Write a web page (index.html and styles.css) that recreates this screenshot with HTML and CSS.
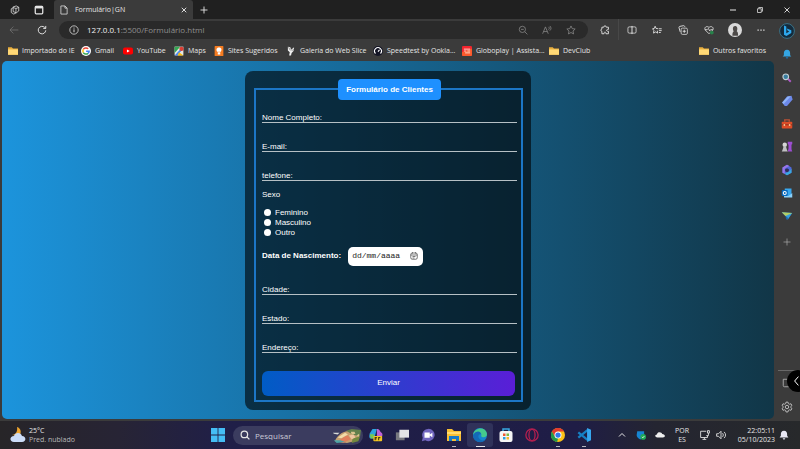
FILE: index.html
```html
<!DOCTYPE html>
<html lang="pt-BR">
<head>
<meta charset="utf-8">
<meta name="viewport" content="width=device-width, initial-scale=1">
<title>Formulário|GN</title>
<link rel="stylesheet" href="styles.css">
</head>
<body>
<header class="tabbar">
  <div class="tab-tools">
    <button class="ib" aria-label="Workspaces"><svg class="i10" viewBox="0 0 16 16"><path d="M5 3l5-1.500 4 2v6l-4 3-5-2zM5 4.500L2 6v6l4 2.500 4-2M5 4l4.500 1.500V12M9.500 5.500L14 4"/></svg></button>
    <button class="ib" aria-label="Guias"><svg class="i10" viewBox="0 0 16 16"><rect x="2" y="2" width="12" height="12" rx="1.500" fill="none" stroke-width="2"/><path d="M2 3.500h12" stroke-width="4"/></svg></button>
  </div>
  <div class="tab">
    <svg class="i10" viewBox="0 0 16 16"><path d="M3 1.500h6.500L13 5v9.500H3zM9.500 1.500V5H13"/></svg>
    <span>Formulário|GN</span>
    <button class="ib" aria-label="Fechar guia"><svg class="i6" viewBox="0 0 16 16"><path d="M2 2l12 12M14 2L2 14" stroke-width="2.500"/></svg></button>
  </div>
  <button class="ib newtab" aria-label="Nova guia"><svg class="i8" viewBox="0 0 16 16"><path d="M8 1v14M1 8h14" stroke-width="1.800"/></svg></button>
  <div class="win">
    <button class="ib" aria-label="Minimizar"><svg class="i6" viewBox="0 0 12 12"><path d="M0 6h12" stroke-width="2"/></svg></button>
    <button class="ib" aria-label="Restaurar"><svg class="i6" viewBox="0 0 12 12"><path d="M1 3.500h7.500V11H1zM3.500 3V1H11v7.500H9" stroke-width="1.500"/></svg></button>
    <button class="ib" aria-label="Fechar"><svg class="i6" viewBox="0 0 12 12"><path d="M1 1l10 10M11 1L1 11" stroke-width="1.800"/></svg></button>
  </div>
</header>

<div class="shell">
  <div class="main">
    <nav class="toolbar">
      <button class="ib back" aria-label="Voltar"><svg class="i10" viewBox="0 0 16 16"><path d="M15 8H1.500M7 2.500L1.500 8 7 13.500"/></svg></button>
      <button class="ib reload" aria-label="Atualizar"><svg class="i10" viewBox="0 0 16 16"><path d="M14 8.500A6 6 0 1 1 12 3.700l2 1.600M14 1.500v4h-4" stroke-width="1.500"/></svg></button>
      <div class="address">
        <svg class="i10" viewBox="0 0 16 16"><circle cx="8" cy="8" r="6.700" fill="none"/><path d="M8 7v4.500M8 4.200v1.500" stroke-width="1.500"/></svg>
        <span class="url"><b>127.0.0.1</b>:5500/Formulário.html</span>
        <button class="ib dim" aria-label="Zoom"><svg class="i10" viewBox="0 0 16 16"><circle cx="7" cy="7" r="5" fill="none"/><path d="M11 11l4 4M4.800 7h4.400"/></svg></button>
        <button class="ib dim" aria-label="Ler em voz alta"><svg class="i10" viewBox="0 0 16 16"><path d="M1 14L5.500 3 10 14M2.800 10.500h5.400M10.500 3c1.500 1.500 1.500 3 0 4.500M12.500 1.500c2.500 2.500 2.500 5 0 7.500"/></svg></button>
        <button class="ib dim" aria-label="Adicionar aos favoritos"><svg class="i10" viewBox="0 0 16 16"><path d="M8 1.500l2 4.300 4.700.6-3.500 3.200.9 4.700L8 12l-4.100 2.300.9-4.700L1.300 6.400 6 5.800z"/></svg></button>
      </div>
      <div class="actions">
        <button class="ib" aria-label="Extensões"><svg class="i10" viewBox="0 0 16 16"><path d="M3 3.500h3c0-3 4-3 4 0h3.500V7c-4-.5-4 3.500 0 3V14H9.500C10 10.500 6 10.500 6.500 14H3v-4c-2.500-.5-2.500-3 0-3.500z" stroke-width="1.400"/></svg></button>
        <button class="ib split" aria-label="Dividir tela"><svg class="i10" viewBox="0 0 16 16"><rect x="1.500" y="3" width="13" height="10" rx="2" fill="none"/><path d="M8 1.500v13" stroke-width="1.500"/></svg></button>
        <button class="ib" aria-label="Favoritos"><svg class="i10" viewBox="0 0 16 16"><path d="M10 6L6.500 5.500 5 2 3.700 5.500.8 6 3 8.500 2.500 13 6 11l3 2-.5-4M11 6h4.500M11 9h4.500M11 12h3" stroke-width="1.400"/></svg></button>
        <button class="ib" aria-label="Coleções"><svg class="i10" viewBox="0 0 16 16"><rect x="5" y="5" width="10" height="10" rx="2" fill="none"/><path d="M10 7.500v5M7.500 10h5M3.500 11L1.500 4c0-1 .5-1.500 1.500-1.800L9 1c1 0 1.500.5 2 2" stroke-width="1.400"/></svg></button>
        <button class="ib" aria-label="Desempenho"><svg class="i10" viewBox="0 0 16 16"><path d="M8 14L2 8C-.5 4 4.500.5 8 4c3.500-3.500 8.500 0 6 4zM1.500 7.500H5l2-2 2 4 1.500-2H14" stroke-width="1.300"/><circle cx="12.500" cy="12" r="3" fill="#27824a" stroke="none"/></svg></button>
        <button class="ib" aria-label="Perfil"><svg class="i14" viewBox="0 0 16 16"><circle cx="8" cy="8" r="8" fill="#d9d9d9" stroke="none"/><path d="M5 14.500c0-3 .5-4 1.500-5C5 7 5.500 3.500 8 3.500s3.500 2.500 2 6c1.500 1 1.500 3 1.500 5z" fill="#4d4a48" stroke="none"/></svg></button>
        <button class="ib" aria-label="Mais"><svg class="i8" viewBox="0 0 16 16"><path d="M1 8h2.500M6.800 8h2.500M12.500 8H15" stroke-width="2.500"/></svg></button>
      </div>
    </nav>

    <nav class="bookmarks" aria-label="Favoritos">
      <a href="#"><svg class="i10" viewBox="0 0 16 16"><use href="#folder"/></svg>Importado do IE</a>
      <a href="#"><svg class="i10" viewBox="0 0 16 16"><circle cx="8" cy="8" r="8" fill="#fff" stroke="none"/><g fill="none" stroke-width="2.400"><path d="M11.500 4.500A5 5 0 0 0 3.700 5.500" stroke="#ea4335"/><path d="M3.700 5.500a5 5 0 0 0 0 5" stroke="#fbbc05"/><path d="M3.700 10.500a5 5 0 0 0 7.600 1.200" stroke="#34a853"/><path d="M11.300 11.700A5 5 0 0 0 13 8.200H8.200" stroke="#4285f4"/></g></svg>Gmail</a>
      <a href="#"><svg class="i10" viewBox="0 0 16 16"><rect y="2.500" width="16" height="11" rx="3" fill="#f00" stroke="none"/><path d="M6.300 5.500l4.500 2.500-4.500 2.500z" fill="#fff" stroke="none"/></svg>YouTube</a>
      <a href="#"><svg class="i10" viewBox="0 0 16 16"><g stroke="none"><path d="M1 1h14v14H1z" fill="#e8e8e3"/><path d="M1 1h9L1 11z" fill="#34a853"/><path d="M1 15L12 3l2 2L5 15z" fill="#4285f4"/><path d="M8 10l7 5H6z" fill="#fbbc04"/><circle cx="12" cy="4.500" r="3.500" fill="#d93f35"/></g></svg>Maps</a>
      <a href="#"><svg class="i10" viewBox="0 0 16 16"><rect x="1" width="14" height="16" rx="1" fill="#f47b20" stroke="none"/><path d="M5 9C2.500 5 5 2.500 8 2.500S13.500 5 11 9H5zM6 10h4v3.500H6z" fill="#fff" stroke="none"/></svg>Sites Sugeridos</a>
      <a href="#"><svg class="i10" viewBox="0 0 16 16"><path d="M3 1l4 1 1 4 5-4-1 6-3 3-1 4H5l1-5-3-3z" fill="#eee" stroke="none"/><path d="M4 2l3 5M9 8l3-3" stroke="#777"/></svg>Galeria do Web Slice</a>
      <a href="#"><svg class="i10" viewBox="0 0 16 16"><circle cx="8" cy="8" r="8" fill="#141526" stroke="none"/><path d="M4 12a5.500 5.500 0 1 1 8 0M8 9l2.500-3" stroke="#fff" stroke-width="1.800"/></svg>Speedtest by Ookla...</a>
      <a href="#"><svg class="i10" viewBox="0 0 16 16"><rect width="16" height="16" rx="2" fill="#f3252f" stroke="none"/><path d="M0 10l16-6v10a2 2 0 0 1-2 2H2a2 2 0 0 1-2-2z" fill="#fb5a2c" stroke="none"/><path d="M3 5h10M3 8h4M8.500 8H13M5 11h8" stroke="#ffd3c4" stroke-width="1.600"/></svg>Globoplay | Assista...</a>
      <a href="#"><svg class="i10" viewBox="0 0 16 16"><use href="#folder"/></svg>DevClub</a>
      <a href="#"><svg class="i10" viewBox="0 0 16 16"><use href="#folder"/></svg>Outros favoritos</a>
    </nav>

    <main class="page">
      <form class="box" action="#">
        <fieldset>
          <legend>Formulário de Clientes</legend>
          <div class="field"><label for="nome">Nome Completo:</label><input id="nome" type="text"></div>
          <div class="field"><label for="email">E-mail:</label><input id="email" type="email"></div>
          <div class="field"><label for="tel">telefone:</label><input id="tel" type="tel"></div>
          <div class="sexo" role="radiogroup" aria-labelledby="sexo">
            <p id="sexo">Sexo</p>
            <label><input type="radio" name="sexo">Feminino</label>
            <label><input type="radio" name="sexo">Masculino</label>
            <label><input type="radio" name="sexo">Outro</label>
          </div>
          <div class="birth">
            <label for="nasc">Data de Nascimento:</label>
            <div class="date">
              <input id="nasc" type="text" placeholder="dd/mm/aaaa">
              <button type="button" aria-label="Abrir calendário"><svg class="i8" viewBox="0 0 16 16"><rect x="1.500" y="2" width="13" height="12.500" rx="3" fill="none"/><path d="M1.500 6h13M5 9h6M5 12h4M5 .5V3M11 .5V3"/></svg></button>
            </div>
          </div>
          <div class="field"><label for="cidade">Cidade:</label><input id="cidade" type="text"></div>
          <div class="field"><label for="estado">Estado:</label><input id="estado" type="text"></div>
          <div class="field"><label for="end">Endereço:</label><input id="end" type="text"></div>
          <button class="send" type="submit">Enviar</button>
        </fieldset>
      </form>
    </main>
  </div>

  <aside class="side">
    <button class="ib" aria-label="Bing"><svg class="i16" viewBox="0 0 16 16"><circle cx="8" cy="8" r="7.400" fill="#142b3c" stroke="#3a7186" stroke-width="1"/><path d="M5 2.500l2.300.9v6.800l3-1.600-1.600-.8-.9-2.200 4.500 1.600v2.800l-4.900 3-2.400-1.300z" fill="#2da8ee" stroke="none"/></svg></button>
    <button class="ib" aria-label="Notificações"><svg class="i10" viewBox="0 0 16 16"><path d="M8 1c4 0 5 3 5 6v3l2 2H1l2-2V7c0-3 1-6 5-6z" fill="#35a5e2" stroke="none"/><path d="M6 13h4c0 3-4 3-4 0z" fill="#1877bd" stroke="none"/></svg></button>
    <div class="side-apps">
      <button class="ib" aria-label="Pesquisar"><svg class="i10" viewBox="0 0 16 16"><path d="M9.500 9.500L14 14" stroke="#b05bc9" stroke-width="3"/><circle cx="6" cy="6" r="4.500" fill="#397d9e" stroke="#c3ced4" stroke-width="1.800"/></svg></button>
      <button class="ib" aria-label="Compras"><svg class="i12" viewBox="0 0 16 16"><path d="M8 2l6-1 1.500 5-7.500 8.500-3 0-3.500-4.500z" fill="#6c88e8" stroke="none"/><path d="M1.500 10l7.500-8 4-.5L3.500 12z" fill="#8fb4f7" stroke="none"/></svg></button>
      <button class="ib" aria-label="Ferramentas"><svg class="i12" viewBox="0 0 16 16"><path d="M5 5V2.500h6V5" stroke="#bd5134" stroke-width="1.800"/><rect x="1" y="5" width="14" height="9" rx="1" fill="#dd4c27" stroke="none"/><path d="M1 9h14" stroke="#8f2d1b"/><path d="M4.500 8v2.500M11.500 8v2.500" stroke="#f4bd86" stroke-width="2"/></svg></button>
      <button class="ib" aria-label="Jogos"><svg class="i12" viewBox="0 0 16 16"><g stroke="none"><path d="M9 1h6v3l-1 1v6l1 3H9l1-4V5L9 4z" fill="#9c4ed0"/><circle cx="5" cy="5" r="3" fill="#d5d5d5"/><path d="M3.500 7h3L8 12l1 2H1l1-2z" fill="#c0c0c2"/></g></svg></button>
      <button class="ib" aria-label="Microsoft 365"><svg class="i12" viewBox="0 0 16 16"><path d="M8 1l6 3.500v7L8 15l-6-3.500v-7z" fill="#5167dc" stroke="none"/><path d="M8 1L2 4.500v7l3 1.500V6l6-3.500z" fill="#9a74e7" stroke="none"/><path d="M14 6v5.500L8 15l-3-2 7-4z" fill="#38a9df" stroke="none"/><path d="M8 5.500l2.500 1.500v2.500L8 11 5.500 9.500V7z" fill="#302d59" stroke="none"/></svg></button>
      <button class="ib" aria-label="Outlook"><svg class="i12" viewBox="0 0 16 16"><g stroke="none"><path d="M5 2h9v11H5z" fill="#38a8ef"/><path d="M4 8l6 4 5-4v6H4z" fill="#89d0fa"/><rect x="1" y="4" width="8" height="8" rx="1" fill="#0668bd"/></g><circle cx="5" cy="8" r="2" fill="none" stroke="#fff" stroke-width="1.400"/></svg></button>
      <button class="ib" aria-label="Drop"><svg class="i12" viewBox="0 0 16 16"><g stroke="none"><path d="M1 3l14 1-6 9-3-5z" fill="#319fe2"/><path d="M1 3l14 1L6 8z" fill="#b2cd64"/><path d="M6 8l1 5 3-2z" fill="#1e67a8"/></g></svg></button>
      <button class="ib add" aria-label="Personalizar"><svg class="i8" viewBox="0 0 16 16"><path d="M8 1v14M1 8h14"/></svg></button>
    </div>
    <div class="side-end">
      <button class="ib" aria-label="Captura"><svg class="i10" viewBox="0 0 16 16"><path d="M10 14H4a2 2 0 0 1-2-2V2h11v6"/><path d="M10 14l4-1"/></svg></button>
      <button class="ib" aria-label="Configurações"><svg class="i12" viewBox="0 0 16 16"><path d="M6.700 1.500h2.600l.5 2 1.500.8 2-.6 1.300 2.300-1.500 1.300v1.500l1.500 1.300-1.300 2.300-2-.6-1.500.8-.5 2H6.700l-.5-2-1.500-.8-2 .6-1.300-2.300 1.500-1.300V7.300L1.400 6l1.300-2.300 2 .6 1.500-.8z"/><circle cx="8" cy="8" r="2.300" fill="none"/></svg></button>
      <button class="float" aria-label="Expandir"><svg class="i10" viewBox="0 0 16 16"><path d="M7 1L1 8l6 7" stroke="#fff" stroke-width="1.600"/></svg></button>
    </div>
  </aside>
</div>

<footer class="taskbar">
  <div class="weather">
    <svg class="i16" viewBox="0 0 16 16"><path d="M7 0c4 1 5 6 2 9L2 8c3 0 6-3 5-8z" fill="#efa52f" stroke="none"/><path d="M4 15c-5 0-4.500-6 0-6 1-4 7-4 8 0 4.500 0 4.500 6 0 6z" fill="#cbdcf8" stroke="none"/></svg>
    <p>25°C<br><span>Pred. nublado</span></p>
  </div>
  <div class="apps">
    <button class="ib" aria-label="Iniciar"><svg class="i14" viewBox="0 0 16 16"><path d="M0 0h7.500v7.500H0zM8.500 0H16v7.500H8.500zM0 8.500h7.500V16H0zM8.500 8.500H16V16H8.500z" fill="#45bdf5" stroke="none"/></svg></button>
    <label class="search">
      <svg class="i10" viewBox="0 0 16 16"><circle cx="7" cy="7" r="5.200" fill="none" stroke-width="2"/><path d="M11 11l4 4" stroke-width="2.200"/></svg>
      <input type="text" placeholder="Pesquisar" aria-label="Pesquisar">
      <svg class="scene" viewBox="0 0 32 16"><g stroke="none"><path d="M3 14C6 7 13 2 22 3l8 1-2 9-12 3z" fill="#c6a271"/><path d="M4 14c6-1 7-5 13-6l3 4-8 4z" fill="#df805c"/><path d="M15 3l6-2 10 1-1 7-8-2z" fill="#617f4b"/><path d="M6 10l8-5 3 2-7 4z" fill="#f1dca8"/><path d="M22 11l8-2-2 5-7 2z" fill="#73893e"/><path d="M1 5l7 0-2 2-4-1z" fill="#d9dcd8"/><path d="M18 8l5-1 2 3-4 2z" fill="#efc7a0"/><path d="M20 4l4 0 1 2-4 1zM26 8l3-2 0 3z" fill="#d9c48e"/><path d="M2 13l7 0 5 2-9 1z" fill="#4ca5a8"/></g></svg>
    </label>
    <div class="pins">
      <button class="ib" aria-label="Copilot"><svg class="i14" viewBox="0 0 16 16"><g stroke="none"><path d="M4 1h5L6 12H2C0 12 0 9 1 6z" fill="#2fa4dd"/><path d="M9 1c4 0 3 3 5 4s2 5-1 6l-4-1z" fill="#be62d5"/><path d="M1 7l5 0-1 5H2z" fill="#78c850"/><rect x="5" y="9" width="10" height="6" rx="1" fill="#f3c623"/></g><path d="M7 14v-3h2M11 14v-3h2M7 12.500h1.500" stroke="#4a3a10"/></svg></button>
      <button class="ib" aria-label="Visão de tarefas"><svg class="i14" viewBox="0 0 16 16"><path d="M1 5h10v9H1z" fill="#77787f" stroke="none"/><path d="M5 2h11v9H5z" fill="#e4e4e6" stroke="none"/></svg></button>
      <button class="ib" aria-label="Chat"><svg class="i14" viewBox="0 0 16 16"><path d="M8 1a7 7 0 1 1-3 13l-4 1 1-4A7 7 0 0 1 8 1z" fill="#7166bf" stroke="none"/><path d="M4 5h6v6H4zM10 7.500l3-2v5l-3-2z" fill="#fff" stroke="none"/></svg></button>
      <button class="ib open" aria-label="Explorador"><svg class="i16" viewBox="0 0 16 16"><g stroke="none"><path d="M1 2h5l2 2h7v10H1z" fill="#f8bf34"/><path d="M1 5h14v2H1z" fill="#ffdc70"/><path d="M3 14V9h10v5h-3v-2H6v2z" fill="#1479c9"/></g></svg></button>
      <button class="ib open active" aria-label="Edge"><svg class="i16" viewBox="0 0 16 16"><circle cx="8" cy="8" r="7" fill="#1684ce" stroke="none"/><path d="M1 8c1-8 13-9 14-1 0 4-5 4-6 2 2-3-3-6-8-1z" fill="#45c98c" stroke="none"/><path d="M1 8c3-5 8-4 8-1-3 0-4 4 0 6 2 1 4 0 5-1-4 6-13 3-13-4z" fill="#136ab7" stroke="none"/></svg></button>
      <button class="ib" aria-label="Microsoft Store"><svg class="i16" viewBox="0 0 16 16"><path d="M5 5V2h6v3" stroke="#37a7df" stroke-width="1.500"/><rect x="1.500" y="4" width="13" height="11" rx="2" fill="#f5f5f6" stroke="none"/><g stroke="none"><path d="M5 6.500h2.500V9H5z" fill="#ed5832"/><path d="M8.500 6.500H11V9H8.500z" fill="#78b943"/><path d="M5 10h2.500v2.500H5z" fill="#2a9fe1"/><path d="M8.500 10H11v2.500H8.500z" fill="#f6b72c"/></g></svg></button>
      <button class="ib" aria-label="Opera GX"><svg class="i14" viewBox="0 0 16 16"><g fill="none" stroke="#b31f4f"><circle cx="8" cy="8" r="7" stroke-width="1.500"/><ellipse cx="8" cy="8" rx="3.500" ry="6.500" stroke-width="1.500"/></g></svg></button>
      <button class="ib open" aria-label="Chrome"><svg class="i14" viewBox="0 0 16 16"><g stroke="none"><circle cx="8" cy="8" r="8" fill="#fbc116"/><path d="M1 4a8 8 0 0 1 14 0H8L4.500 10z" fill="#e33b2e"/><path d="M1 4l3.500 6 3.500 2-1 4A8 8 0 0 1 1 4z" fill="#229a4b"/><circle cx="8" cy="8" r="4" fill="#fff"/><circle cx="8" cy="8" r="3" fill="#3479e8"/></g></svg></button>
      <button class="ib open" aria-label="VS Code"><svg class="i14" viewBox="0 0 16 16"><path d="M1.500 5L12 13.500M1.500 11L12 2.500" stroke="#1680c4" stroke-width="2.600"/><path d="M11.500 0L16 2v12l-4.500 2z" fill="#36a7ef" stroke="none"/></svg></button>
    </div>
  </div>
  <div class="tray">
    <button class="ib" aria-label="Ícones ocultos"><svg class="i8" viewBox="0 0 16 16"><path d="M2 11l6-6 6 6" stroke-width="2"/></svg></button>
    <button class="ib" aria-label="Segurança"><svg class="i10" viewBox="0 0 16 16"><path d="M2 2h11v6c0 4-3 6-6 7-3-1-6-4-6-7z" fill="#1685d2" stroke="none"/><circle cx="11.500" cy="11" r="4.500" fill="#20a856" stroke="none"/><path d="M9.500 11l1.500 1.500 2.500-3" stroke="#fff"/></svg></button>
    <button class="ib" aria-label="OneDrive"><svg class="i10" viewBox="0 0 16 16"><path d="M4 12C-1 12-.5 7 3 7c1-5 8-4 8.500-.5 5 0 6 5.500 1 5.500z" fill="#eee" stroke="none"/></svg></button>
    <p class="lang">POR<br>ES</p>
    <svg class="i10" viewBox="0 0 16 16"><path d="M10 2H1v10h11V9M4 15h6M7 12v3M12 1h3v4h-3zM13.500 5v4H10" stroke-width="1.400"/></svg>
    <svg class="i10" viewBox="0 0 16 16"><path d="M1 6h3l4-4v12l-4-4H1zM10.500 5c1.500 2 1.500 4 0 6M13 3c3 3 3 7 0 10" stroke-width="1.400"/></svg>
    <p class="clock">22:05:11<br>05/10/2023</p>
    <button class="ib" aria-label="Notificações"><svg class="i10" viewBox="0 0 16 16"><path d="M8 1c4 0 5 3 5 6v2l2 3H1l2-3V7c0-3 1-6 5-6zM6 13h4c0 3-4 3-4 0z" fill="#e8e8f4" stroke="none"/></svg></button>
  </div>
</footer>

<svg class="defs" aria-hidden="true"><symbol id="folder" viewBox="0 0 16 16"><path d="M0 2h6l2 2h8v10H0z" fill="#e9ae3c" stroke="none"/><path d="M0 5.500h16V14H0z" fill="#ffd876" stroke="none"/></symbol></svg>
</body>
</html>
```
FILE: styles.css
```css
* { box-sizing: border-box; }

body {
  margin: 0;
  min-height: 100vh;
  display: flex;
  flex-direction: column;
  overflow-x: hidden;
  background: #3b3b3b;
  color: #e6e6e6;
  font: 7px/10px "Open Sans", "Noto Sans", sans-serif;
}

p { margin: 0; }
button, input { font: inherit; color: inherit; }
svg { display: block; flex: none; fill: none; stroke: currentColor; stroke-width: 1.2; }
.defs { position: absolute; width: 0; height: 0; }

.i6 { width: 6px; height: 6px; }
.i8 { width: 8px; height: 8px; }
.i10 { width: 10px; height: 10px; }
.i12 { width: 12px; height: 12px; }
.i14 { width: 14px; height: 14px; }
.i16 { width: 16px; height: 16px; }

.ib {
  display: flex;
  align-items: center;
  justify-content: center;
  padding: 0;
  border: 0;
  background: none;
}
.dim { color: #8c8c8c; }

/* Tab strip */
.tabbar { display: flex; height: 19px; background: #202020; }
.tab-tools { display: flex; align-items: center; gap: 14px; width: 54px; padding-left: 10px; }
.tab {
  display: flex;
  align-items: center;
  gap: 6px;
  width: 139px;
  padding: 0 5px;
  background: #3b3b3b;
  border-radius: 3px 3px 0 0;
}
.tab .ib { width: 8px; margin-left: auto; }
.newtab { width: 22px; }
.win { display: flex; margin-left: auto; }
.win .ib { width: 27px; }

.shell { flex: 1; display: flex; }
.main { flex: 1; min-width: 0; display: flex; flex-direction: column; }

/* Address row */
.toolbar { display: flex; align-items: center; height: 21px; }
.back, .reload { width: 28px; }
.back { color: #777; }
.address {
  flex: 1;
  display: flex;
  align-items: center;
  height: 18px;
  margin-left: 3px;
  padding: 0 12px 0 10px;
  border-radius: 9px;
  background: #2a2a2a;
}
.url { flex: 1; padding-left: 8px; font-size: 8px; color: #8f8f8f; }
.url b { font-weight: 400; color: #f0f0f0; }
.address .ib { margin-left: 14px; }
.actions { display: flex; align-self: stretch; padding-left: 4px; }
.actions .ib { width: 26px; }
.split { border-left: 1px solid #484848; }

/* Bookmarks */
.bookmarks {
  display: grid;
  grid-template-columns: 73px 42px 51px 40px 72px 87px 89px 87px 1fr auto;
  align-items: center;
  height: 21px;
  padding: 0 8px;
}
.bookmarks a {
  display: flex;
  align-items: center;
  gap: 4px;
  color: inherit;
  text-decoration: none;
  white-space: nowrap;
}

/* Page */
.page {
  flex: 1;
  display: flex;
  align-items: center;
  justify-content: center;
  margin: 0 0 2px 2px;
  border-radius: 5px;
  background: linear-gradient(to right, rgb(28, 148, 220), rgb(17, 54, 71));
  font: 8px/10px "Liberation Sans", Arial, sans-serif;
  color: #fff;
}
.box {
  width: 286px;
  max-width: 100%;
  padding: 8px 8px 8px 9px;
  border-radius: 8px;
  background: rgba(0, 0, 0, 0.6);
}
fieldset {
  min-width: 0;
  margin: 0;
  padding: 11px 4px 4px 6px;
  border: 2px solid #1c76c6;
}
legend {
  margin: 0 auto;
  padding: 6px 8px;
  border-radius: 4px;
  background: dodgerblue;
  font-weight: 700;
  line-height: 9px;
}
.field {
  display: flex;
  height: 12px;
  margin-bottom: 17px;
  border-bottom: 1px solid #b6c0c5;
  line-height: 13px;
}
.field input {
  flex: 1;
  min-width: 0;
  padding: 0;
  border: 0;
  outline: 0;
  background: none;
}
.sexo { margin-top: -8px; }
.sexo p { margin-bottom: 8px; }
.sexo label { display: flex; align-items: center; gap: 4px; }
.sexo input {
  appearance: none;
  width: 7px;
  height: 7px;
  margin: 0 0 0 2px;
  border-radius: 50%;
  background: #fff;
}
.birth {
  display: flex;
  align-items: center;
  gap: 7px;
  margin: 9px 0 17px;
  font-weight: 700;
}
.date {
  display: flex;
  align-items: center;
  width: 75px;
  height: 19px;
  padding: 0 5px 0 4px;
  border-radius: 5px;
  background: #fff;
  color: #222;
}
.date input {
  flex: 1;
  min-width: 0;
  padding: 0;
  border: 0;
  outline: 0;
  background: none;
  font: 8px/10px "Liberation Mono", monospace;
}
.date input::placeholder { color: #222; opacity: 1; }
.date button { padding: 0; border: 0; background: none; }
.send {
  display: block;
  width: calc(100% - 2px);
  height: 25px;
  margin-top: 18px;
  border: 0;
  border-radius: 6px;
  background: linear-gradient(to right, rgb(0, 92, 197), rgb(90, 30, 215));
}

/* Sidebar */
.side { width: 26px; display: flex; flex-direction: column; }
.side .ib { width: 26px; height: 23px; }
.side-apps { padding-top: 1px; }
.side .add { margin-top: 3px; color: #bbb; }
.side-end {
  position: relative;
  margin: auto 0 2px 4px;
  border-top: 1px solid #686868;
}
.side-end .ib { width: 18px; height: 24px; color: #c4c4c4; }
.float {
  position: absolute;
  top: -1px;
  right: -9px;
  width: 22px;
  height: 22px;
  padding: 0 0 0 7px;
  border: 0;
  border-radius: 50%;
  background: #000;
}

/* Taskbar */
.taskbar {
  display: grid;
  grid-template-columns: 211px 1fr auto;
  align-items: center;
  height: 28px;
  background: linear-gradient(to right, #272528, #272435 15%, #201f48 28%, #1f1d46 72%, #242531 82%, #27292b);
  line-height: 9px;
}
.weather { display: flex; align-items: center; gap: 3px; padding-left: 10px; }
.weather span { color: #b8b8b8; }
.apps { display: flex; align-items: center; }
.search {
  display: flex;
  align-items: center;
  width: 130px;
  height: 19px;
  margin-left: 8px;
  padding: 0 1px 0 7px;
  border-radius: 10px;
  background: #3b3c5f;
}
.search input {
  flex: 1;
  min-width: 0;
  padding: 0 0 0 5px;
  border: 0;
  outline: 0;
  background: none;
  font-size: 8px;
}
.search input::placeholder { color: #c9c9d6; opacity: 1; }
.scene { width: 30px; height: 15px; }
.pins { display: flex; }
.pins .ib { position: relative; width: 26px; height: 24px; }
.open::after {
  content: "";
  position: absolute;
  bottom: 0;
  width: 4px;
  height: 1px;
  background: #b5b5bd;
}
.active { border-radius: 3px; background: #30325a; }
.active::after { width: 9px; background: #e4e4ea; }
.tray {
  display: grid;
  grid-template-columns: 18px 20px 18px 26px 20px 12px 48px 18px;
  align-items: center;
  justify-items: center;
  padding-right: 7px;
}
.tray > .ib, .tray > svg { margin-top: 0; }
.lang { text-align: center; }
.clock { justify-self: end; text-align: right; }
```
